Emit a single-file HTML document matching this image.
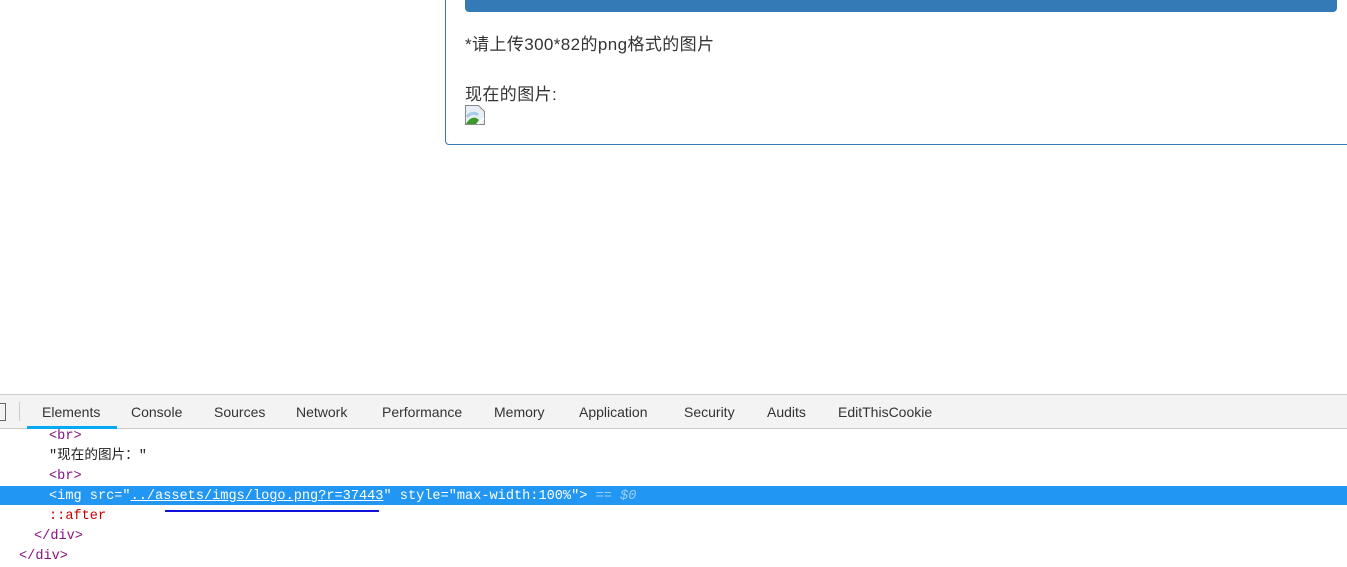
<!DOCTYPE html>
<html><head><meta charset="utf-8"><style>
body{margin:0;width:1347px;height:562px;overflow:hidden;background:#fff;position:relative;font-family:"Liberation Sans","Noto Sans CJK SC",sans-serif}
.panel{position:absolute;left:445px;top:-10px;width:920px;height:155px;border:1px solid #337ab7;border-radius:4px;box-sizing:border-box}
.btn{position:absolute;left:465px;top:-10px;width:872px;height:22px;background:#337ab7;border-radius:4px}
.t{position:absolute;left:465px;font-size:17px;color:#333;letter-spacing:0.4px}
.tabs{position:absolute;left:0;top:394px;width:1347px;height:35px;background:#f3f3f3;border-top:1px solid #ccc;border-bottom:1px solid #ccc;box-sizing:border-box}
.tab{position:absolute;top:0;height:33px;line-height:34px;font-size:14px;color:#333}
.code{position:absolute;font-family:"Liberation Mono","Noto Sans CJK SC",monospace;font-size:13.6px;line-height:20px;white-space:pre}
.tg{color:#881280}
</style></head><body>
<div class="panel"></div>
<div class="btn"></div>
<div class="t" style="top:30px">*请上传300*82的png格式的图片</div>
<div class="t" style="top:80px">现在的图片:</div>
<svg style="position:absolute;left:465px;top:105px" width="20" height="20"><path d="M0.5 0.5h13l6 6v13H0.5z" fill="#e8eef6" stroke="#888"/><path d="M1 19c4-7 9-8 13-4l-3 4z" fill="#3f9a2e"/><path d="M2 12c3-4 8-5 11-2" fill="none" stroke="#a9cbea" stroke-width="3"/><path d="M13 19l6-6" stroke="#fff" stroke-width="2"/></svg>
<div class="tabs">
<div style="position:absolute;left:-6px;top:8px;width:10px;height:16px;border:1px solid #666"></div>
<div style="position:absolute;left:19px;top:7px;width:1px;height:19px;background:#ccc"></div>
<div class="tab" style="left:42px">Elements</div>
<div style="position:absolute;left:27px;top:31px;width:90px;height:3px;background:#03a9f4"></div>
<div class="tab" style="left:131px">Console</div>
<div class="tab" style="left:214px">Sources</div>
<div class="tab" style="left:296px">Network</div>
<div class="tab" style="left:382px">Performance</div>
<div class="tab" style="left:494px">Memory</div>
<div class="tab" style="left:579px">Application</div>
<div class="tab" style="left:684px">Security</div>
<div class="tab" style="left:767px">Audits</div>
<div class="tab" style="left:838px">EditThisCookie</div>
</div>
<div style="position:absolute;left:0;top:486px;width:1347px;height:19px;background:#2196f3"></div>
<div class="code" style="left:49px;top:427px"><span class="tg">&lt;br&gt;</span></div>
<div class="code" style="left:49px;top:447px;color:#222">"现在的图片："</div>
<div class="code" style="left:49px;top:467px"><span class="tg">&lt;br&gt;</span></div>
<div class="code" style="left:49px;top:487px;color:#fff">&lt;img src="<u>../assets/imgs/logo.png?r=37443</u>" style="max-width:100%"&gt; <i style="color:#9fcff5">== $0</i></div>
<div style="position:absolute;left:165px;top:510px;width:214px;height:2px;background:#1010e0"></div>
<div class="code" style="left:49px;top:507px;color:#c80000">::after</div>
<div class="code" style="left:34px;top:527px"><span class="tg">&lt;/div&gt;</span></div>
<div class="code" style="left:19px;top:547px"><span class="tg">&lt;/div&gt;</span></div>
</body></html>
